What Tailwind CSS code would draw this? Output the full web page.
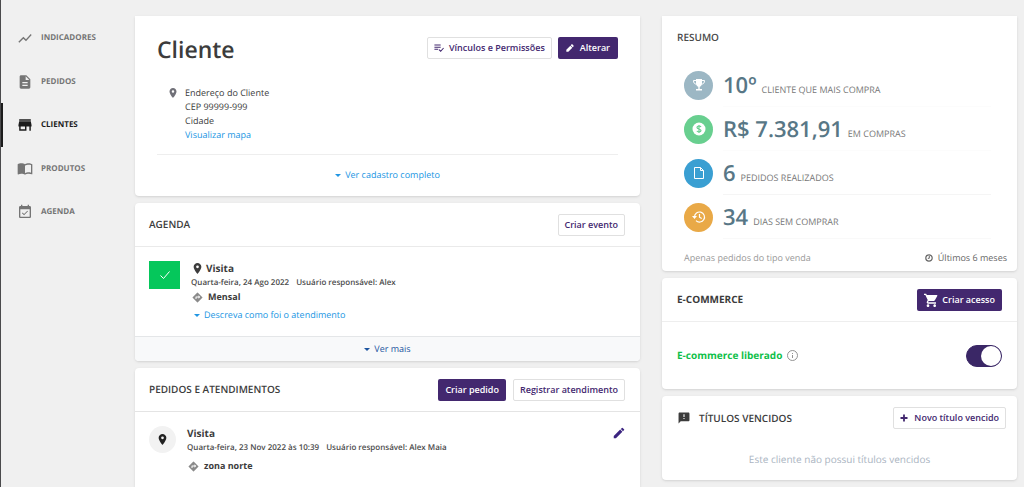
<!DOCTYPE html>
<html lang="pt-BR">
<head>
<meta charset="utf-8">
<meta name="viewport" content="width=device-width, initial-scale=1">
<title>Cliente</title>
<script src="https://cdn.jsdelivr.net/npm/@tailwindcss/browser@4"></script>
</head>
<body class="bg-[#f0f0f0] font-['Open_Sans','Noto_Sans',sans-serif] text-[#3c3c3c] [text-rendering:geometricPrecision]">
<div class="flex min-h-screen border-l border-[#4a4a4c]">

  <nav class="w-[134px] shrink-0 pt-4 text-[8px] font-bold text-[#757575]" aria-label="Principal">
    <a href="#" class="flex h-11 items-center gap-2 border-l-2 border-transparent pl-[14px]">
      <svg class="size-4" viewBox="0 0 24 24" fill="currentColor"><path d="M3.500 19l6-6 4 4L22 7.400l-1.400-1.400-7.100 8-4-4L2 17.500z"/></svg>
      INDICADORES</a>
    <a href="#" class="flex h-[43px] items-center gap-2 border-l-2 border-transparent pl-[14px]">
      <svg class="size-4" viewBox="0 0 24 24" fill="currentColor"><path d="M14 2H6c-1.100 0-2 .9-2 2v16c0 1.100.9 2 2 2h12c1.100 0 2-.9 2-2V8zm2 16H8v-2h8zm0-4H8v-2h8zm-3-5V3.500L18.500 9z"/></svg>
      PEDIDOS</a>
    <a href="#" class="flex h-11 items-center gap-2 border-l-2 border-[#1c1c1c] pl-[14px] text-[#1c1c1c]" aria-current="page">
      <svg class="size-4" viewBox="1 1 22 22" fill="currentColor"><path d="M20 4H4v2h16zm1 10v-2l-1-5H4l-1 5v2h1v6h10v-6h4v6h2v-6zm-9 4H6v-4h6z"/></svg>
      CLIENTES</a>
    <a href="#" class="flex h-[43px] items-center gap-2 border-l-2 border-transparent pl-[14px]">
      <svg class="size-4" viewBox="0 1 24 24" fill="currentColor"><path d="M21 5c-1.110-.35-2.330-.5-3.500-.5-1.950 0-4.050.4-5.500 1.500-1.450-1.100-3.550-1.500-5.500-1.500S2.450 4.900 1 6v14.650c0 .25.25.5.5.5.1 0 .15-.05.25-.05C3.100 20.450 5.050 20 6.500 20c1.950 0 4.050.4 5.500 1.500 1.350-.85 3.800-1.500 5.500-1.500 1.650 0 3.350.3 4.750 1.050.1.050.15.050.25.050.25 0 .5-.25.5-.5V6c-.6-.45-1.250-.75-2-1zm0 13.500c-1.100-.35-2.300-.5-3.500-.5-1.700 0-4.150.65-5.500 1.500V8c1.350-.85 3.800-1.500 5.500-1.500 1.200 0 2.400.15 3.500.5z"/></svg>
      PRODUTOS</a>
    <a href="#" class="flex h-[43px] items-center gap-2 border-l-2 border-transparent pl-[14px]">
      <svg class="size-4" viewBox="0 0 24 24" fill="currentColor"><path d="M16.530 11.060L15.470 10l-4.880 4.880-2.120-2.120-1.060 1.060L10.590 17zM19 3h-1V1h-2v2H8V1H6v2H5c-1.110 0-1.990.9-1.990 2L3 19c0 1.100.89 2 2 2h14c1.100 0 2-.9 2-2V5c0-1.100-.9-2-2-2zm0 16H5V8h14z"/></svg>
      AGENDA</a>
  </nav>

  <main class="grid flex-1 grid-cols-[505fr_355fr] gap-x-[22px] pt-4 pr-[7px]">

    <div class="flex flex-col gap-[7px]">
      <section class="rounded-b-sm bg-white px-[22px] pt-[21px] shadow-sm">
        <div class="flex items-start justify-between">
          <h1 class="text-[23px] leading-[24px] font-semibold">Cliente</h1>
          <div class="flex gap-[6px] text-[9px] font-semibold">
            <button class="flex h-[22px] items-center gap-[5px] rounded-xs border border-[#e0e0e0] px-[6px] text-[#43286f]">
              <svg class="size-[10px]" viewBox="0 0 24 24" fill="none" stroke="currentColor" stroke-width="2.500"><path d="M1 5h15M1 10h15M1 15h9M12 16l4 4 7-8"/></svg>
              Vínculos e Permissões</button>
            <button class="flex h-[22px] items-center gap-[6px] rounded-xs bg-[#43286f] px-2 text-white">
              <svg class="size-2" viewBox="0 0 24 24" fill="currentColor"><path d="M1 17v6h6L19 11l-6-6zM23 7a2 2 0 0 0 0-2l-4-4a2 2 0 0 0-2 0l-3 3 6 6z"/></svg>
              Alterar</button>
          </div>
        </div>
        <div class="flex gap-[7px] pt-[25px] pb-3 pl-[11px] text-[9px]">
          <svg class="mt-[2px] size-[10px] text-[#707078]" viewBox="2 2 20 20" fill="currentColor"><path d="M12 2C8.130 2 5 5.130 5 9c0 5.250 7 13 7 13s7-7.750 7-13c0-3.870-3.130-7-7-7zm0 9.500a2.500 2.500 0 1 1 0-5 2.500 2.500 0 0 1 0 5z"/></svg>
          <address class="leading-[14px] not-italic">Endereço do Cliente<br>CEP 99999-999<br>Cidade<br><a href="#" class="text-[#2196e3]">Visualizar mapa</a></address>
        </div>
        <div class="flex justify-center border-t border-[#eeeeee] pt-[13px] pb-[14px] text-[9px]">
          <a href="#" class="flex items-center gap-1 leading-[14px] text-[#2196e3]">
            <svg class="h-[3px] w-[6px]" viewBox="0 0 6 3" fill="currentColor"><path d="M0 0h6L3 3z"/></svg>Ver cadastro completo</a>
        </div>
      </section>

      <section class="rounded-sm bg-white shadow-sm">
        <header class="flex h-11 items-center justify-between border-b border-[#eaeaea] pr-[15px] pl-[14px]">
          <h2 class="text-[10px] font-semibold">AGENDA</h2>
          <button class="h-[22px] rounded-xs border border-[#e0e0e0] px-[6px] text-[9px] font-semibold text-[#43286f]">Criar evento</button>
        </header>
        <div class="flex gap-[11px] px-[14px] pt-[14px] pb-[14px]">
          <div class="flex h-7 w-[31px] items-center justify-center bg-[#05c75b] text-white">
            <svg class="size-[12px]" viewBox="0 0 12 12" fill="none" stroke="currentColor"><path d="M1.500 6.500l3 3 6-7"/></svg>
          </div>
          <div>
            <h3 class="flex h-[15px] items-center gap-[3px] pl-[1px] text-[10px] font-bold">
              <svg class="size-[11px]" viewBox="2 2 20 20" fill="currentColor"><path d="M12 2C8.130 2 5 5.130 5 9c0 5.250 7 13 7 13s7-7.750 7-13c0-3.870-3.130-7-7-7zm0 9.500a2.500 2.500 0 1 1 0-5 2.500 2.500 0 0 1 0 5z"/></svg>Visita</h3>
            <p class="flex gap-[7px] text-[8px] leading-[14px] font-semibold text-[#4c4c4c]"><span>Quarta-feira, 24 Ago 2022</span><span>Usuário responsável: Alex</span></p>
            <p class="flex h-[14px] items-center gap-[5px] pl-[1px] text-[9px] font-bold">
              <svg class="size-[11px] text-[#8a8a8a]" viewBox="1 1 22 22" fill="currentColor"><path d="M21.710 11.290l-9-9a1 1 0 0 0-1.410 0l-9 9a1 1 0 0 0 0 1.410l9 9a1 1 0 0 0 1.410 0l9-9a1 1 0 0 0 0-1.410zM14 14.500V12h-4v3H8v-4c0-.55.45-1 1-1h5V7.500l3.500 3.500z"/></svg>Mensal</p>
            <a href="#" class="mt-1 flex items-center gap-1 pl-[3px] text-[9px] leading-[14px] text-[#2196e3]">
              <svg class="h-[3px] w-[6px]" viewBox="0 0 6 3" fill="currentColor"><path d="M0 0h6L3 3z"/></svg>Descreva como foi o atendimento</a>
          </div>
        </div>
        <footer class="flex h-[25px] items-center justify-center rounded-b-sm border-t border-[#e4e6e8] bg-[#f8f9fa] text-[9px]">
          <a href="#" class="flex items-center gap-1 text-[#1d559f]">
            <svg class="h-[3px] w-[6px]" viewBox="0 0 6 3" fill="currentColor"><path d="M0 0h6L3 3z"/></svg>Ver mais</a>
        </footer>
      </section>

      <section class="flex-1 rounded-t-sm bg-white shadow-sm">
        <header class="flex h-11 items-center justify-between border-b border-[#e4e4e4] pr-[15px] pl-[14px]">
          <h2 class="text-[10px] font-semibold">PEDIDOS E ATENDIMENTOS</h2>
          <div class="flex gap-[7px] text-[9px] font-semibold">
            <button class="h-[22px] rounded-xs bg-[#43286f] px-[7px] text-white">Criar pedido</button>
            <button class="h-[22px] rounded-xs border border-[#e0e0e0] px-[6px] text-[#43286f]">Registrar atendimento</button>
          </div>
        </header>
        <div class="flex gap-[11px] px-[14px] pt-[14px]">
          <div class="flex size-[27px] items-center justify-center rounded-full bg-[#f2f2f2] text-[#222]">
            <svg class="size-[11px]" viewBox="2 2 20 20" fill="currentColor"><path d="M12 2C8.130 2 5 5.130 5 9c0 5.250 7 13 7 13s7-7.750 7-13c0-3.870-3.130-7-7-7zm0 9.500a2.500 2.500 0 1 1 0-5 2.500 2.500 0 0 1 0 5z"/></svg>
          </div>
          <div class="flex-1">
            <h3 class="text-[10px] leading-[15px] font-bold">Visita</h3>
            <p class="flex gap-[7px] text-[8px] leading-[14px] font-semibold text-[#4c4c4c]"><span>Quarta-feira, 23 Nov 2022 às 10:39</span><span>Usuário responsável: Alex Maia</span></p>
            <p class="mt-1 flex h-[14px] items-center gap-[5px] pl-[1px] text-[9px] font-bold">
              <svg class="size-[11px] text-[#8a8a8a]" viewBox="1 1 22 22" fill="currentColor"><path d="M21.710 11.290l-9-9a1 1 0 0 0-1.410 0l-9 9a1 1 0 0 0 0 1.410l9 9a1 1 0 0 0 1.410 0l9-9a1 1 0 0 0 0-1.410zM14 14.500V12h-4v3H8v-4c0-.55.45-1 1-1h5V7.500l3.500 3.500z"/></svg>zona norte</p>
          </div>
          <button class="size-[14px] text-[#3b2480]" aria-label="Editar">
            <svg class="size-[14px]" viewBox="0 0 24 24" fill="currentColor"><path d="M3 17.250V21h3.750L17.810 9.940l-3.750-3.750zM20.710 7.040a1 1 0 0 0 0-1.410l-2.340-2.340a1 1 0 0 0-1.410 0l-1.830 1.830 3.750 3.750z"/></svg>
          </button>
        </div>
      </section>
    </div>

    <div class="flex flex-col gap-[7px]">
      <section class="rounded-b-sm bg-white pt-[14px] shadow-sm">
        <h2 class="pl-[15px] text-[10px] leading-[14px] font-semibold text-[#4a4a4a]">RESUMO</h2>
        <ul class="mt-[19px] pr-[26px] pl-[22px] text-[9px] text-[#777]">
          <li class="flex h-11 items-center gap-[10px]">
            <span class="flex size-[29px] items-center justify-center rounded-full bg-[#9cb7c4] text-white">
              <svg class="size-[14px]" viewBox="0 0 14 14"><path d="M4 1h6v4.500C10 7.500 8.500 8.500 7.700 8.700V11H10v1.500H4V11h2.300V8.700C5.500 8.500 4 7.500 4 5.500z" fill="currentColor"/><path d="M4 2.500H1.500C1.500 5 2.500 6 4.500 6.200M10 2.500h2.500C12.500 5 11.500 6 9.500 6.200" fill="none" stroke="currentColor"/></svg>
            </span>
            <p class="flex h-full flex-1 items-baseline gap-[5px] border-b border-[#fcfcfc] pt-[6px]"><strong class="text-[22px] leading-[32px] font-semibold text-[#587786]">10º</strong> CLIENTE QUE MAIS COMPRA</p>
          </li>
          <li class="flex h-11 items-center gap-[10px]">
            <span class="flex size-[29px] items-center justify-center rounded-full bg-[#68cf8f] text-white">
              <svg class="size-[14px]" viewBox="0 0 14 14"><circle cx="7" cy="7" r="6.500" fill="currentColor"/><path d="M9 5C8.600 4.200 7.800 4 7 4 5.800 4 5 4.600 5 5.400 5 7.400 9 6.500 9 8.600 9 9.400 8.200 10 7 10 6 10 5.200 9.700 4.900 8.900M7 3v8" fill="none" stroke="#68cf8f" stroke-width="1.200"/></svg>
            </span>
            <p class="flex h-full flex-1 items-baseline gap-[5px] border-b border-[#fcfcfc] pt-[6px]"><strong class="text-[22px] leading-[32px] font-semibold text-[#587786]">R$ 7.381,91</strong> EM COMPRAS</p>
          </li>
          <li class="flex h-11 items-center gap-[10px]">
            <span class="flex size-[29px] items-center justify-center rounded-full bg-[#3a9fd2] text-white">
              <svg class="size-[14px]" viewBox="0 0 14 14" fill="none" stroke="currentColor" stroke-linejoin="round"><path d="M2.500 1.500h6l3 3v8h-9zM8.500 1.500v3h3"/></svg>
            </span>
            <p class="flex h-full flex-1 items-baseline gap-[5px] border-b border-[#f5f5f5] pt-[6px]"><strong class="text-[22px] leading-[32px] font-semibold text-[#587786]">6</strong> PEDIDOS REALIZADOS</p>
          </li>
          <li class="flex h-11 items-center gap-[10px]">
            <span class="flex size-[29px] items-center justify-center rounded-full bg-[#e9a947] text-white">
              <svg class="size-[14px]" viewBox="0 0 14 14" fill="none" stroke="currentColor" stroke-width="1.200"><path d="M2.500 7a5 5 0 1 1 1.500 3.600M7.500 4v3.200l2.200 1.300"/><path d="M0 6h5L2.500 9z" fill="currentColor" stroke="none"/></svg>
            </span>
            <p class="flex h-full flex-1 items-baseline gap-[5px] border-b border-[#f9f9f9] pt-[6px]"><strong class="text-[22px] leading-[32px] font-semibold text-[#587786]">34</strong> DIAS SEM COMPRAR</p>
          </li>
        </ul>
        <div class="flex items-center justify-between pt-3 pr-[10px] pb-[6px] pl-[22px] text-[9px] leading-[14px] text-[#999]">
          <p>Apenas pedidos do tipo venda</p>
          <p class="flex items-center gap-[5px] text-[#666]">
            <svg class="size-2" viewBox="0 0 8 8" fill="none" stroke="currentColor"><circle cx="4" cy="4" r="3.200" stroke-width="1.200"/><path d="M4.300 2v2.300H2.800"/></svg>Últimos 6 meses</p>
        </div>
      </section>

      <section class="rounded-sm bg-white shadow-sm">
        <header class="flex h-11 items-center justify-between border-b border-[#eeeeee] px-[15px]">
          <h2 class="text-[10px] font-bold">E-COMMERCE</h2>
          <button class="flex h-[22px] items-center gap-1 rounded-xs bg-[#43286f] px-[7px] text-[9px] font-semibold text-white">
            <svg class="size-[14px]" viewBox="1 1 21 21" fill="currentColor"><path d="M7 18c-1.100 0-1.990.9-1.990 2S5.900 22 7 22s2-.9 2-2-.9-2-2-2zM1 2v2h2l3.600 7.590-1.350 2.450c-.16.280-.25.610-.25.960 0 1.100.9 2 2 2h12v-2H7.420c-.14 0-.25-.11-.25-.25l.03-.12.900-1.630h7.450c.75 0 1.410-.41 1.750-1.030l3.580-6.490A1 1 0 0 0 20 4H5.210l-.94-2zm16 16c-1.100 0-1.990.9-1.990 2s.89 2 1.990 2 2-.9 2-2-.9-2-2-2z"/></svg>
            Criar acesso</button>
        </header>
        <div class="flex h-[67px] items-center justify-between px-[15px]">
          <label for="ecommerce" class="flex items-center gap-[5px] text-[10px] font-bold text-[#0fbf4a]">E-commerce liberado
            <svg class="size-[11px] text-[#888]" viewBox="0 0 11 11" fill="none" stroke="currentColor" stroke-width="0.900"><circle cx="5.500" cy="5.500" r="5"/><path d="M5.500 5v3M5.500 3v1"/></svg>
          </label>
          <input id="ecommerce" type="checkbox" role="switch" checked class="h-[22px] w-9 appearance-none rounded-full border border-[#3a2766] bg-white before:block before:size-5 before:rounded-full before:bg-[#3a2766] checked:bg-[#3a2766] checked:before:ml-[14px] checked:before:bg-white">
        </div>
      </section>

      <section class="rounded-sm bg-white pb-[13px] shadow-sm">
        <header class="flex h-11 items-center justify-between pr-[11px] pl-4">
          <h2 class="flex items-center gap-[9px] text-[10px] font-semibold">
            <svg class="size-3" viewBox="1 1 22 22" fill="currentColor"><path d="M20 2H4c-1.100 0-1.990.9-1.990 2L2 22l4-4h14c1.100 0 2-.9 2-2V4c0-1.100-.9-2-2-2zm-7 12h-2v-2h2zm0-4h-2V5h2z"/></svg>
            TÍTULOS VENCIDOS</h2>
          <button class="flex h-[22px] items-center gap-[6px] rounded-xs border border-[#e0e0e0] px-[6px] text-[9px] font-semibold text-[#43286f]">
            <svg class="size-2" viewBox="0 0 8 8" stroke="currentColor" stroke-width="1.800"><path d="M4 .5v7M.5 4h7"/></svg>
            Novo título vencido</button>
        </header>
        <p class="pt-[11px] text-center text-[10px] leading-[16px] text-[#aab4bf]">Este cliente não possui títulos vencidos</p>
      </section>
    </div>
  </main>
</div>
</body>
</html>
